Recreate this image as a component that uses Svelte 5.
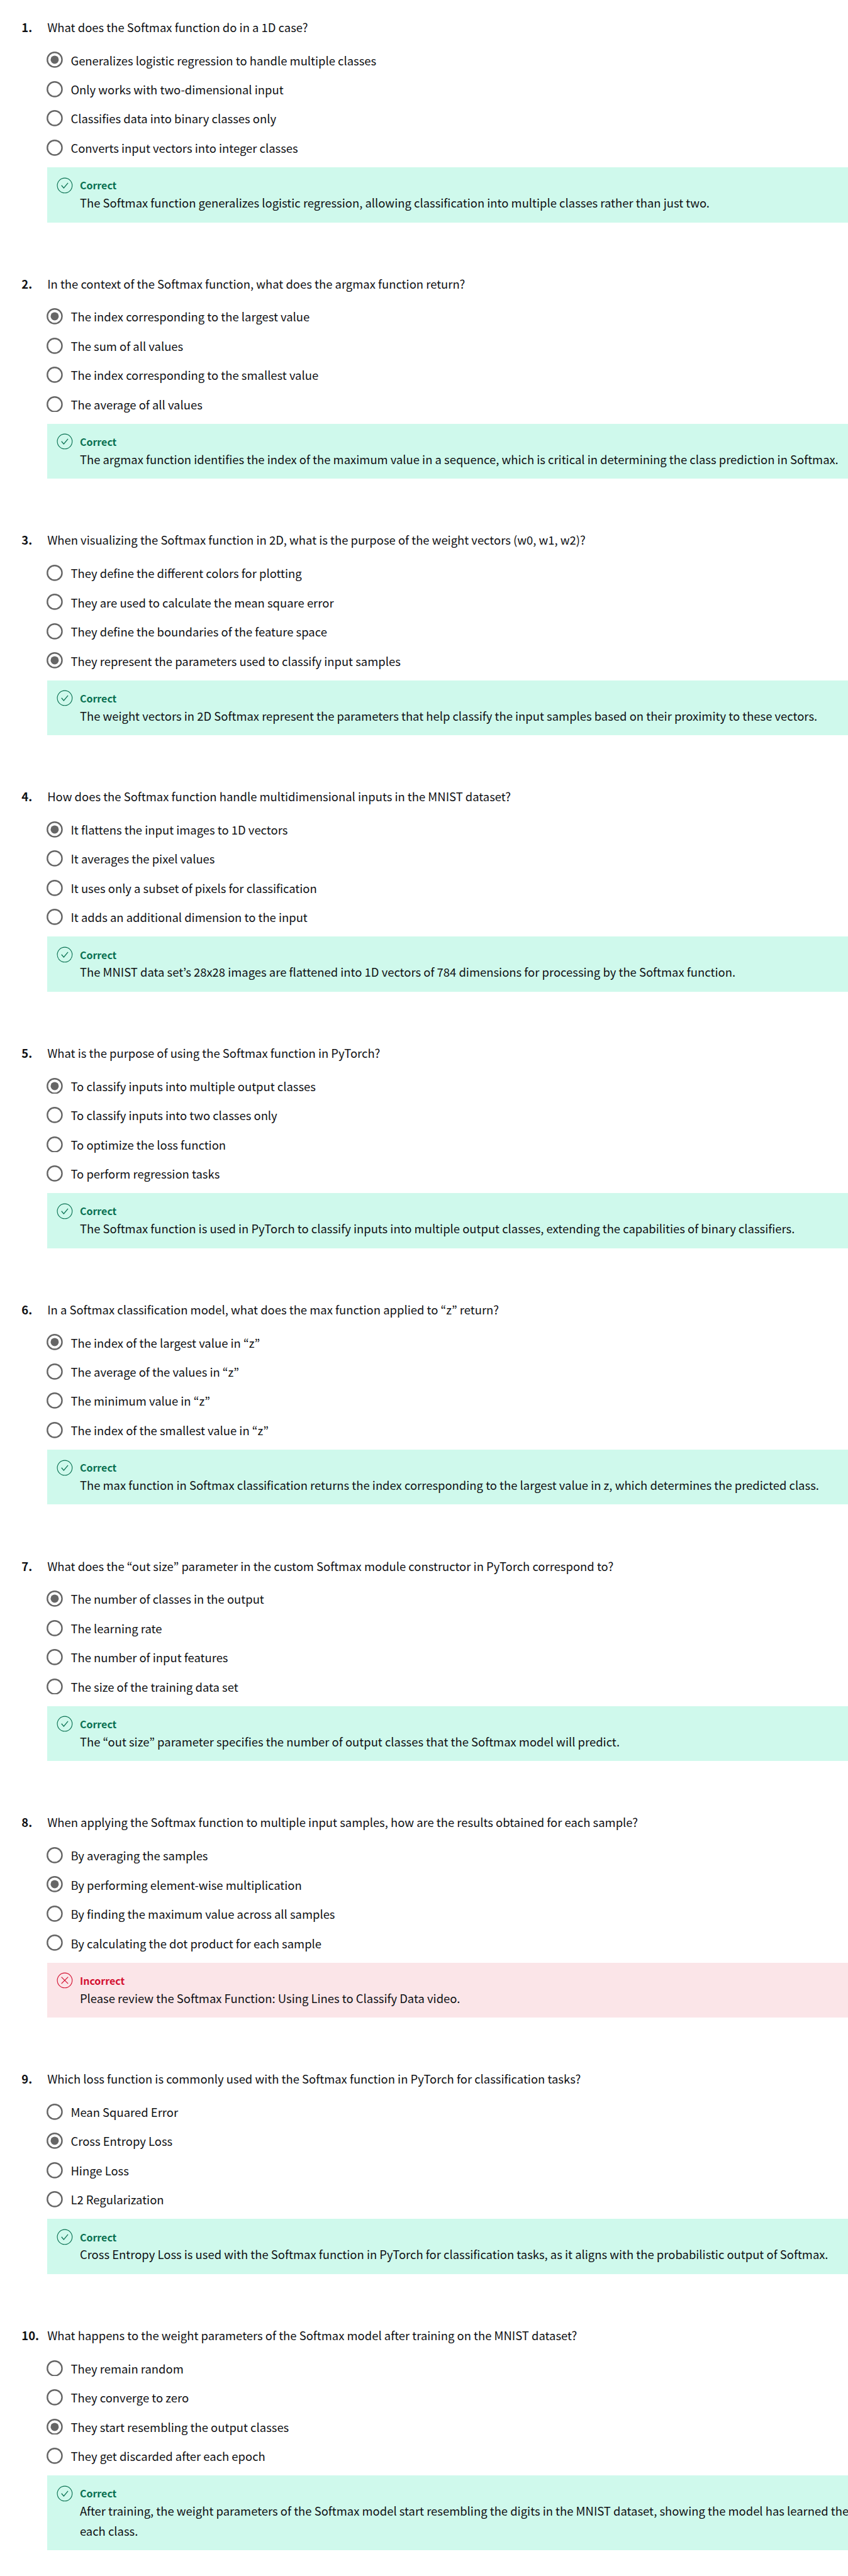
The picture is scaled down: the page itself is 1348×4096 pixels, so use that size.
<script>
  const questions = [
    {
      text: 'What does the Softmax function do in a 1D case?',
      options: ['Generalizes logistic regression to handle multiple classes', 'Only works with two-dimensional input', 'Classifies data into binary classes only', 'Converts input vectors into integer classes'],
      selected: 0,
      correct: true,
      feedback: ['The Softmax function generalizes logistic regression, allowing classification into multiple classes rather than just two.'],
    },
    {
      text: 'In the context of the Softmax function, what does the argmax function return?',
      options: ['The index corresponding to the largest value', 'The sum of all values', 'The index corresponding to the smallest value', 'The average of all values'],
      selected: 0,
      correct: true,
      feedback: ['The argmax function identifies the index of the maximum value in a sequence, which is critical in determining the class prediction in Softmax.'],
    },
    {
      text: 'When visualizing the Softmax function in 2D, what is the purpose of the weight vectors (w0, w1, w2)?',
      options: ['They define the different colors for plotting', 'They are used to calculate the mean square error', 'They define the boundaries of the feature space', 'They represent the parameters used to classify input samples'],
      selected: 3,
      correct: true,
      feedback: ['The weight vectors in 2D Softmax represent the parameters that help classify the input samples based on their proximity to these vectors.'],
    },
    {
      text: 'How does the Softmax function handle multidimensional inputs in the MNIST dataset?',
      options: ['It flattens the input images to 1D vectors', 'It averages the pixel values', 'It uses only a subset of pixels for classification', 'It adds an additional dimension to the input'],
      selected: 0,
      correct: true,
      feedback: ['The MNIST data set’s 28x28 images are flattened into 1D vectors of 784 dimensions for processing by the Softmax function.'],
    },
    {
      text: 'What is the purpose of using the Softmax function in PyTorch?',
      options: ['To classify inputs into multiple output classes', 'To classify inputs into two classes only', 'To optimize the loss function', 'To perform regression tasks'],
      selected: 0,
      correct: true,
      feedback: ['The Softmax function is used in PyTorch to classify inputs into multiple output classes, extending the capabilities of binary classifiers.'],
    },
    {
      text: 'In a Softmax classification model, what does the max function applied to “z” return?',
      options: ['The index of the largest value in “z”', 'The average of the values in “z”', 'The minimum value in “z”', 'The index of the smallest value in “z”'],
      selected: 0,
      correct: true,
      feedback: ['The max function in Softmax classification returns the index corresponding to the largest value in z, which determines the predicted class.'],
    },
    {
      text: 'What does the “out size” parameter in the custom Softmax module constructor in PyTorch correspond to?',
      options: ['The number of classes in the output', 'The learning rate', 'The number of input features', 'The size of the training data set'],
      selected: 0,
      correct: true,
      feedback: ['The “out size” parameter specifies the number of output classes that the Softmax model will predict.'],
    },
    {
      text: 'When applying the Softmax function to multiple input samples, how are the results obtained for each sample?',
      options: ['By averaging the samples', 'By performing element-wise multiplication', 'By finding the maximum value across all samples', 'By calculating the dot product for each sample'],
      selected: 1,
      correct: false,
      feedback: ['Please review the Softmax Function: Using Lines to Classify Data video.'],
    },
    {
      text: 'Which loss function is commonly used with the Softmax function in PyTorch for classification tasks?',
      options: ['Mean Squared Error', 'Cross Entropy Loss', 'Hinge Loss', 'L2 Regularization'],
      selected: 1,
      correct: true,
      feedback: ['Cross Entropy Loss is used with the Softmax function in PyTorch for classification tasks, as it aligns with the probabilistic output of Softmax.'],
    },
    {
      text: 'What happens to the weight parameters of the Softmax model after training on the MNIST dataset?',
      options: ['They remain random', 'They converge to zero', 'They start resembling the output classes', 'They get discarded after each epoch'],
      selected: 2,
      correct: true,
      feedback: ['After training, the weight parameters of the Softmax model start resembling the digits in the MNIST dataset, showing the model has learned the', 'each class.'],
    },
  ];
</script>

<main class="quiz">
  {#each questions as q, i}
    <section class="question">
      <div class="number">{i + 1}.</div>
      <div class="content">
        <h2 class="prompt">{q.text}</h2>
        <ul class="options">
          {#each q.options as option, j}
            <li class="option">
              <svg class="radio" viewBox="0 0 28 28" aria-hidden="true">
                <circle cx="14" cy="14" r="12.6" fill="none" stroke="#666" stroke-width="2.6" />
                {#if j === q.selected}<circle cx="14" cy="14" r="7" fill="#666" />{/if}
              </svg>
              <span class="label">{option}</span>
            </li>
          {/each}
        </ul>
        <div class="feedback" class:wrong={!q.correct}>
          <svg class="status-icon" viewBox="0 0 28 28" fill="none" stroke="currentColor" aria-hidden="true">
            <circle cx="14" cy="14" r="12.8" stroke-width="1.2" />
            {#if q.correct}
              <path d="M8.4 13.8l3.9 4.6 7.3-8.8" stroke-width="1.3" />
            {:else}
              <path d="M8.3 8.3l11.4 11.4M19.7 8.3L8.3 19.7" stroke-width="1.3" />
            {/if}
          </svg>
          <div class="message">
            <strong class="verdict">{q.correct ? 'Correct' : 'Incorrect'}</strong>
            {#each q.feedback as line}<p class="line">{line}</p>{/each}
          </div>
        </div>
      </div>
    </section>
  {/each}
</main>

<style>
  :global(body) {
    margin: 0;
    background: #fff;
  }
  .quiz {
    --u: 0.92329px;
    box-sizing: border-box;
    width: 1348px;
    height: 4096px;
    padding: calc(var(--u) * 30.1) 0 0 calc(var(--u) * 37.2);
    overflow: hidden;
    background: #fff;
    color: #0f1114;
    font-family: 'Noto Sans CJK KR', 'Noto Sans', sans-serif;
    font-size: calc(var(--u) * 19.98);
    line-height: calc(var(--u) * 34);
    white-space: nowrap;
  }
  .question {
    display: flex;
    height: calc(var(--u) * 441.68);
  }
  .number {
    flex: none;
    width: calc(var(--u) * 44.2);
    font-weight: 700;
  }
  .content {
    flex: 1;
    min-width: 0;
  }
  .prompt {
    margin: 0;
    font-size: inherit;
    font-weight: 400;
  }
  .options {
    margin: calc(var(--u) * 14) 0 0;
    padding: 0;
    list-style: none;
  }
  .option {
    display: flex;
    align-items: center;
    gap: calc(var(--u) * 13.8);
    height: calc(var(--u) * 50.33);
  }
  .label {
    padding-top: calc(var(--u) * 2);
  }
  .radio {
    flex: none;
    width: calc(var(--u) * 28);
    height: calc(var(--u) * 28);
    margin-left: calc(var(--u) * -1.4);
  }
  .feedback {
    display: flex;
    gap: calc(var(--u) * 11.5);
    margin-top: calc(var(--u) * 8.7);
    padding: calc(var(--u) * 17) 0 calc(var(--u) * 16.3) calc(var(--u) * 16.6);
    background: #cff9ec;
  }
  .feedback.wrong {
    background: #fbe5e8;
  }
  .status-icon {
    flex: none;
    width: calc(var(--u) * 28);
    height: calc(var(--u) * 28);
    color: #087051;
  }
  .wrong .status-icon,
  .wrong .verdict {
    color: #d30f30;
  }
  .message {
    min-width: 0;
    padding-top: calc(var(--u) * 1.7);
  }
  .verdict {
    display: block;
    margin-bottom: calc(var(--u) * 1.8);
    color: #087051;
    font-size: calc(var(--u) * 17.3);
    font-weight: 700;
    line-height: calc(var(--u) * 24);
  }
  .line {
    margin: 0;
  }
</style>
